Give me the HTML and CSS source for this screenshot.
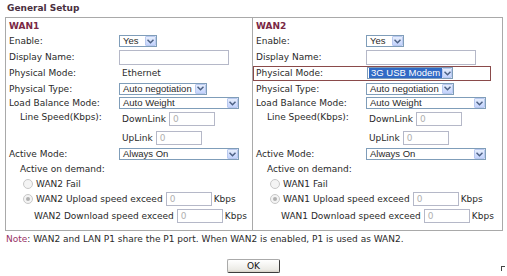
FILE: index.html
```html
<!DOCTYPE html>
<html lang="en">
<head>
  <meta charset="UTF-8" />
  <title>General Setup</title>
  <link rel="stylesheet" href="styles.css">
</head>
<body>

  <div class="title">General Setup</div>

  <!-- WAN panes -->
  <div class="setup">

    <div class="pane">
      <div class="row head">WAN1</div>
      <div class="row"><span class="lbl">Enable:</span>
        <div class="sel w-yes"><span class="val">Yes</span><span class="btn"><svg width="7" height="5" viewBox="0 0 7 5"><path d="M0.5 0.8 L3.5 3.8 L6.5 0.8" fill="none" stroke="#4d6185" stroke-width="1.5"/></svg></span></div>
      </div>
      <div class="row"><span class="lbl">Display Name:</span><span class="inp w-name"></span></div>
      <div class="row"><span class="lbl">Physical Mode:</span><span class="plain">Ethernet</span></div>
      <div class="row r-type"><span class="lbl">Physical Type:</span>
        <div class="sel w-neg"><span class="val">Auto negotiation</span><span class="btn"><svg width="7" height="5" viewBox="0 0 7 5"><path d="M0.5 0.8 L3.5 3.8 L6.5 0.8" fill="none" stroke="#4d6185" stroke-width="1.5"/></svg></span></div>
      </div>
      <div class="row r-lb"><span class="lbl">Load Balance Mode:</span>
        <div class="sel w-wide"><span class="val">Auto Weight</span><span class="btn"><svg width="7" height="5" viewBox="0 0 7 5"><path d="M0.5 0.8 L3.5 3.8 L6.5 0.8" fill="none" stroke="#4d6185" stroke-width="1.5"/></svg></span></div>
      </div>
      <div class="row r-down"><span class="lbl sub up2">Line Speed(Kbps):</span><span class="plain">DownLink</span><span class="inp w-num">0</span></div>
      <div class="row r-up"><span class="lbl"></span><span class="plain">UpLink</span><span class="inp w-num">0</span></div>
      <div class="row r-act"><span class="lbl">Active Mode:</span>
        <div class="sel w-wide"><span class="val">Always On</span><span class="btn"><svg width="7" height="5" viewBox="0 0 7 5"><path d="M0.5 0.8 L3.5 3.8 L6.5 0.8" fill="none" stroke="#4d6185" stroke-width="1.5"/></svg></span></div>
      </div>
      <div class="row r-dem"><span class="sub">Active on demand:</span></div>
      <div class="row r-fail"><span class="radio"></span>WAN2 Fail</div>
      <div class="row r-upl"><span class="radio on"></span>WAN2 Upload speed exceed <span class="inp w-num">0</span><span class="unit">Kbps</span></div>
      <div class="row r-dnl"><span class="nopad">WAN2 Download speed exceed</span> <span class="inp w-num">0</span><span class="unit">Kbps</span></div>
    </div>

    <div class="pane">
      <div class="row head">WAN2</div>
      <div class="row"><span class="lbl">Enable:</span>
        <div class="sel w-yes"><span class="val">Yes</span><span class="btn"><svg width="7" height="5" viewBox="0 0 7 5"><path d="M0.5 0.8 L3.5 3.8 L6.5 0.8" fill="none" stroke="#4d6185" stroke-width="1.5"/></svg></span></div>
      </div>
      <div class="row"><span class="lbl">Display Name:</span><span class="inp w-name"></span></div>
      <div class="row"><div class="focus"><span class="lbl">Physical Mode:</span>
        <div class="sel w-modem"><span class="val picked">3G USB Modem</span><span class="btn"><svg width="7" height="5" viewBox="0 0 7 5"><path d="M0.5 0.8 L3.5 3.8 L6.5 0.8" fill="none" stroke="#4d6185" stroke-width="1.5"/></svg></span></div>
      </div></div>
      <div class="row r-type"><span class="lbl">Physical Type:</span>
        <div class="sel w-neg"><span class="val">Auto negotiation</span><span class="btn"><svg width="7" height="5" viewBox="0 0 7 5"><path d="M0.5 0.8 L3.5 3.8 L6.5 0.8" fill="none" stroke="#4d6185" stroke-width="1.5"/></svg></span></div>
      </div>
      <div class="row r-lb"><span class="lbl">Load Balance Mode:</span>
        <div class="sel w-wide"><span class="val">Auto Weight</span><span class="btn"><svg width="7" height="5" viewBox="0 0 7 5"><path d="M0.5 0.8 L3.5 3.8 L6.5 0.8" fill="none" stroke="#4d6185" stroke-width="1.5"/></svg></span></div>
      </div>
      <div class="row r-down"><span class="lbl sub up2">Line Speed(Kbps):</span><span class="plain">DownLink</span><span class="inp w-num">0</span></div>
      <div class="row r-up"><span class="lbl"></span><span class="plain">UpLink</span><span class="inp w-num">0</span></div>
      <div class="row r-act"><span class="lbl">Active Mode:</span>
        <div class="sel w-wide"><span class="val">Always On</span><span class="btn"><svg width="7" height="5" viewBox="0 0 7 5"><path d="M0.5 0.8 L3.5 3.8 L6.5 0.8" fill="none" stroke="#4d6185" stroke-width="1.5"/></svg></span></div>
      </div>
      <div class="row r-dem"><span class="sub">Active on demand:</span></div>
      <div class="row r-fail"><span class="radio"></span>WAN1 Fail</div>
      <div class="row r-upl"><span class="radio on"></span>WAN1 Upload speed exceed <span class="inp w-num">0</span><span class="unit">Kbps</span></div>
      <div class="row r-dnl"><span class="nopad">WAN1 Download speed exceed</span> <span class="inp w-num">0</span><span class="unit">Kbps</span></div>
    </div>

  </div>

  <p class="note"><span class="key">Note</span>: WAN2 and LAN P1 share the P1 port. When WAN2 is enabled, P1 is used as WAN2.</p>

  <div class="actions">
    <button class="ok" type="button">OK</button>
  </div>

  <span class="corner"></span>

</body>
</html>
```

FILE: styles.css
```css
body {
  margin: 0;
  font-family: "DejaVu Sans", Verdana, sans-serif;
  font-size: 9px;
  color: #2a2a2a;
  background: #fff;
  width: 507px;
  height: 276px;
  overflow: hidden;
  position: relative;
}

.title {
  height: 17px;
  line-height: 17px;
  padding-left: 7px;
  color: #4a2f40;
  font-weight: bold;
}

.setup {
  display: grid;
  grid-template-columns: 247px 1fr;
  margin-left: 5px;
  width: 498px;
  height: 214px;
  box-sizing: border-box;
  border: 1px solid #a9a9a9;
}

.pane {
  padding-left: 3px;
}

.pane:first-child {
  border-right: 1px solid #a9a9a9;
}

.row {
  display: flex;
  align-items: center;
  height: 16px;
  white-space: nowrap;
}

.row.head {
  height: 15px;
  color: #7a2845;
  font-weight: bold;
}

.r-type { height: 15px; }
.r-lb { height: 14px; }
.r-down { height: 18px; }
.r-up { height: 19px; }
.r-act { height: 14px; }
.r-dem { height: 15px; }
.r-fail { height: 15px; padding-left: 14px; }
.r-upl { height: 16px; padding-left: 14px; }
.r-dnl { height: 17px; padding-left: 25px; }

.lbl {
  width: 110px;
  flex: none;
}

.sub {
  padding-left: 11px;
  box-sizing: border-box;
}

.up2 {
  position: relative;
  top: -2px;
}

.plain {
  padding-left: 3px;
}

.focus {
  display: flex;
  align-items: center;
  width: 238px;
  height: 15px;
  margin-left: -3px;
  padding-left: 2px;
  box-sizing: border-box;
  border: 1px solid #8a4a4a;
}

.focus .lbl {
  width: 111px;
}

.sel {
  display: flex;
  align-items: center;
  height: 12px;
  box-sizing: border-box;
  border: 1px solid #7f9db9;
  background: #fff;
  font-family: "Liberation Sans", Arial, sans-serif;
  font-size: 9.5px;
}

.sel .val {
  flex: 1;
  padding-left: 3px;
  line-height: 10px;
}

.sel .val.picked {
  flex: none;
  background: #316ac5;
  color: #fff;
  margin-left: 1px;
  padding: 0 2px;
}

.sel .btn {
  display: flex;
  align-items: center;
  justify-content: center;
  width: 11px;
  height: 10px;
  box-sizing: border-box;
  border: 1px solid #b9c9ef;
  border-radius: 1px;
  background: linear-gradient(#e6eefc, #c3d3fd);
  margin-left: auto;
}

.w-yes { width: 38px; }
.w-neg { width: 88px; }
.w-wide { width: 120px; }
.w-modem { width: 86px; }

.inp {
  display: inline-block;
  height: 14px;
  line-height: 12px;
  box-sizing: border-box;
  border: 1px solid #b5b8c8;
  padding-left: 3px;
  color: #b0b0b0;
  background: #fff;
}

.w-name {
  width: 110px;
  height: 15px;
}

.w-num {
  width: 46px;
  margin-left: 3px;
}

.unit {
  padding-left: 2px;
}

.radio {
  display: inline-block;
  width: 8px;
  height: 8px;
  margin-right: 3px;
  border: 1px solid #c8c8c8;
  border-radius: 50%;
  background: #f4f4f4;
  position: relative;
}

.radio.on::after {
  content: "";
  position: absolute;
  left: 2px;
  top: 2px;
  width: 4px;
  height: 4px;
  border-radius: 50%;
  background: #b0b0b0;
}

.note {
  margin: 0;
  height: 16px;
  line-height: 16px;
  padding-left: 6px;
  white-space: nowrap;
}

.note .key {
  color: #993366;
}

.actions {
  text-align: center;
  padding-top: 12px;
}

.ok {
  width: 53px;
  height: 14px;
  padding: 0;
  font-family: "DejaVu Sans", Verdana, sans-serif;
  font-size: 9px;
  color: #111;
  border: 1px solid #3c3c3c;
  border-top-color: #aaa;
  border-left-color: #aaa;
  border-radius: 2px;
  background: linear-gradient(#ffffff, #ecebe6 80%, #d6d0c5);
}

.corner {
  position: absolute;
  left: 501px;
  top: 266px;
  width: 3px;
  height: 4px;
  border-left: 1px solid #444;
  border-top: 1px solid #444;
}
```
